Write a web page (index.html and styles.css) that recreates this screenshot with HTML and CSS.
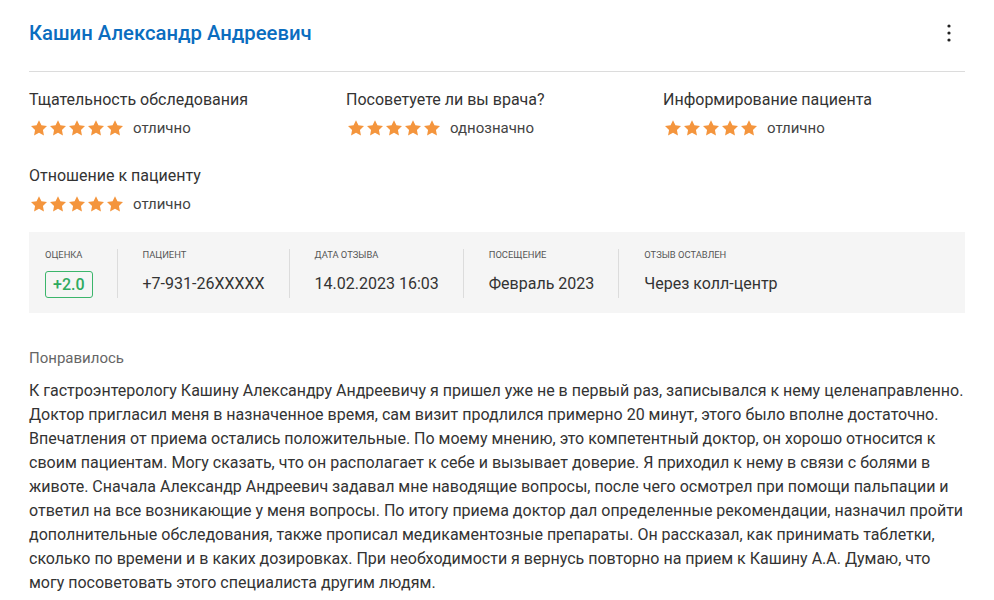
FILE: index.html
```html
<!DOCTYPE html>
<html lang="ru">
<head>
<meta charset="utf-8">
<link rel="stylesheet" href="styles.css">
</head>
<body>
<div class="review">
  <div class="header">
    <h1 class="name">Кашин Александр Андреевич</h1>
    <button class="menu" aria-label="menu">
      <svg width="4" height="18" viewBox="0 0 4 18"><circle cx="2" cy="2" r="1.6"/><circle cx="2" cy="9" r="1.6"/><circle cx="2" cy="16" r="1.6"/></svg>
    </button>
  </div>
  <div class="ratings">
    <div class="rating">
      <div class="r-label">Тщательность обследования</div>
      <div class="r-value"><span class="stars"></span><span class="r-text">отлично</span></div>
    </div>
    <div class="rating">
      <div class="r-label">Посоветуете ли вы врача?</div>
      <div class="r-value"><span class="stars"></span><span class="r-text">однозначно</span></div>
    </div>
    <div class="rating">
      <div class="r-label">Информирование пациента</div>
      <div class="r-value"><span class="stars"></span><span class="r-text">отлично</span></div>
    </div>
    <div class="rating">
      <div class="r-label">Отношение к пациенту</div>
      <div class="r-value"><span class="stars"></span><span class="r-text">отлично</span></div>
    </div>
  </div>
  <div class="info">
    <div class="cell">
      <div class="c-label">Оценка</div>
      <div class="c-value"><span class="badge">+2.0</span></div>
    </div>
    <div class="cell">
      <div class="c-label">Пациент</div>
      <div class="c-value">+7-931-26XXXXX</div>
    </div>
    <div class="cell">
      <div class="c-label">Дата отзыва</div>
      <div class="c-value">14.02.2023 16:03</div>
    </div>
    <div class="cell">
      <div class="c-label">Посещение</div>
      <div class="c-value">Февраль 2023</div>
    </div>
    <div class="cell">
      <div class="c-label">Отзыв оставлен</div>
      <div class="c-value">Через колл-центр</div>
    </div>
  </div>
  <div class="section-title">Понравилось</div>
  <p class="text">К гастроэнтерологу Кашину Александру Андреевичу я пришел уже не в первый раз, записывался к нему целенаправленно. Доктор пригласил меня в назначенное время, сам визит продлился примерно 20 минут, этого было вполне достаточно. Впечатления от приема остались положительные. По моему мнению, это компетентный доктор, он хорошо относится к своим пациентам. Могу сказать, что он располагает к себе и вызывает доверие. Я приходил к нему в связи с болями в животе. Сначала Александр Андреевич задавал мне наводящие вопросы, после чего осмотрел при помощи пальпации и ответил на все возникающие у меня вопросы. По итогу приема доктор дал определенные рекомендации, назначил пройти дополнительные обследования, также прописал медикаментозные препараты. Он рассказал, как принимать таблетки, сколько по времени и в каких дозировках. При необходимости я вернусь повторно на прием к Кашину А.А. Думаю, что могу посоветовать этого специалиста другим людям.</p>
</div>
</body>
</html>
```

FILE: styles.css
```css
* { box-sizing: border-box; }
html, body { margin: 0; padding: 0; background: #fff; }
body { font-family: Roboto, "Noto Sans", sans-serif; color: #333; }

.review { padding: 0 29px; }

.header {
  display: flex;
  align-items: center;
  justify-content: space-between;
  height: 72px;
  border-bottom: 1px solid #dcdcdc;
  padding-bottom: 6px;
}
.name {
  margin: 0;
  font-size: 20.3px;
  font-weight: 500;
  color: #0b6dbf;
  line-height: 24px;
}
.menu {
  border: 0;
  background: none;
  padding: 0;
  margin-right: 14px;
  width: 4px;
  height: 18px;
  display: flex;
  fill: #222;
}

.ratings {
  display: grid;
  grid-template-columns: 317px 317px 1fr;
  row-gap: 27px;
  padding-top: 18px;
}
.r-label {
  font-size: 16px;
  line-height: 20px;
  color: #333;
}
.r-value {
  display: flex;
  align-items: center;
  margin-top: 7px;
  height: 22px;
}
.stars {
  display: inline-block;
  width: 95px;
  height: 17px;
  background-image: url("data:image/svg+xml,%3Csvg xmlns='http://www.w3.org/2000/svg' width='19' height='17' viewBox='0 0 19 17'%3E%3Cpath fill='%23f4953d' d='M9 0.3l2.45 5.05 5.55.75-4.05 3.85 1 5.5L9 12.8 4.05 15.45l1-5.5L1 6.1l5.55-.75z'/%3E%3C/svg%3E");
  background-repeat: repeat-x;
  margin-left: 1px;
}
.r-text {
  margin-left: 8px;
  font-size: 15px;
  color: #444;
}

.info {
  display: flex;
  background: #f5f5f5;
  margin-top: 17px;
  padding: 17px 16px 15px;
  height: 81px;
}
.cell {
  padding: 0 24px 0 25px;
  border-left: 1px solid #dcdcdc;
}
.cell:first-child { padding-left: 0; border-left: 0; }
.c-label {
  font-size: 9.4px;
  text-transform: uppercase;
  color: #555;
  line-height: 12px;
  margin-top: 0;
}
.c-value {
  margin-top: 9px;
  font-size: 16px;
  line-height: 28px;
  height: 28px;
  display: flex;
  align-items: center;
  color: #333;
}
.badge {
  display: inline-block;
  border: 1px solid #3bb56b;
  border-radius: 3px;
  color: #2faa5f;
  font-weight: 500;
  font-size: 16px;
  line-height: 25px;
  padding: 0 7px;
}

.section-title {
  margin-top: 35px;
  font-size: 15px;
  line-height: 20px;
  color: #666;
}
.text {
  margin: 11px 0 0;
  font-size: 16px;
  line-height: 24px;
  color: #333;
}
```
